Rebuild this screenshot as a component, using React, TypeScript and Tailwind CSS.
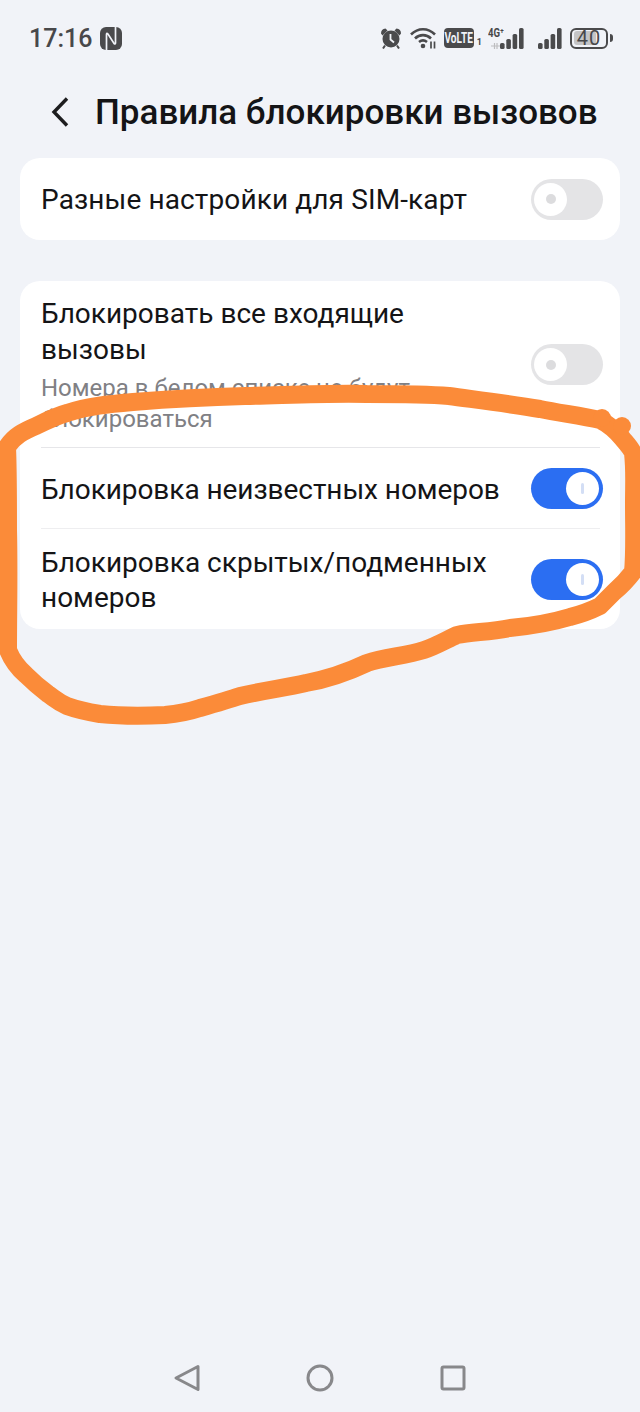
const font = { fontFamily: '"Roboto", "Noto Sans", sans-serif' };

const Toggle = ({ on }: { on?: boolean }) => {
  if (on) {
    return (
      <div className="w-[72px] h-[41px] shrink-0 rounded-full bg-[#2b6ef2] flex items-center justify-end pr-[4px]">
        <div className="w-[33px] h-[33px] rounded-full bg-white flex items-center justify-center">
          <div className="w-[3px] h-[11px] rounded-full bg-[#d3def5]" />
        </div>
      </div>
    );
  }
  return (
    <div className="w-[72px] h-[41px] shrink-0 rounded-full bg-[#e4e4e6] flex items-center pl-[3px]">
      <div className="w-[33px] h-[33px] rounded-full bg-white flex items-center justify-center">
        <div className="w-[10px] h-[10px] rounded-full bg-[#dcdcde]" />
      </div>
    </div>
  );
};

const Bars = () => (
  <svg width="24" height="21" viewBox="0 0 24 21" fill="#4a4a4c">
    <rect x="0" y="15" width="4.6" height="6" rx="1.6" />
    <rect x="6.3" y="11" width="4.6" height="10" rx="1.6" />
    <rect x="12.6" y="6" width="4.6" height="15" rx="1.6" />
    <rect x="19" y="0" width="4.6" height="21" rx="1.6" />
  </svg>
);

const StatusBar = () => (
  <div className="h-[76px] shrink-0 flex items-center pl-[29px] pr-[27px] text-[#48484a]">
    <span className="text-[25px] font-medium leading-none">17:16</span>
    <svg className="ml-[8px]" width="22" height="23" viewBox="0 0 22 23">
      <rect x="0" y="0" width="22" height="23" rx="6" fill="#4a4a4c" />
      <path d="M6.500 23V7.500q0-2 1.500-.5l6 9.500q1.500 1 1.500-.5V0" fill="none" stroke="#f1f3f8" strokeWidth="1.700" />
    </svg>
    <div className="ml-auto flex items-center">
      <svg width="22" height="22" viewBox="0 0 22 22" fill="#4a4a4c">
        <circle cx="11" cy="12" r="8.5" />
        <path d="M1 6.500Q1 2 5.500 1.500L7.500 3.500 2.500 8.500zM21 6.500Q21 2 16.500 1.500L14.500 3.500 19.500 8.500z" />
        <path d="M5 18.500l-2 3M17 18.500l2 3" stroke="#4a4a4c" strokeWidth="2" />
        <path d="M10.500 7v5.500l3.500 3" fill="none" stroke="#f1f3f8" strokeWidth="1.800" />
      </svg>
      <svg className="ml-[8px]" width="27" height="22" viewBox="0 0 27 22" fill="none" stroke="#4a4a4c" strokeWidth="2.600">
        <path d="M1 7.500c7-7 17-7 24 0" />
        <path d="M5 11.500c4.500-4.500 11.500-4.500 16 0" />
        <path d="M9 15c2.500-2 5.500-2 8 0" />
        <circle cx="13" cy="19" r="2.300" fill="#4a4a4c" stroke="none" />
        <path d="M21 14.500v7M24.500 14.500v7" strokeWidth="1.700" />
      </svg>
      <div className="ml-[7px] w-[30px] h-[20px] rounded-[4px] bg-[#4a4a4c] text-[#f1f3f8] text-[14px] font-bold leading-[20px] flex justify-center overflow-hidden">
        <span className="inline-block scale-x-[0.72] whitespace-nowrap">VoLTE</span>
      </div>
      <span className="ml-[3px] self-end text-[9px] font-bold leading-none mb-[2px]">1</span>
      <div className="ml-[6px] relative w-[36px] h-[21px] flex justify-end">
        <span className="absolute left-0 top-[-1px] text-[12px] font-bold leading-none inline-block scale-x-[0.8] origin-left whitespace-nowrap">4G⁺</span>
        <svg className="absolute left-[3px] bottom-0" width="9" height="6" viewBox="0 0 9 6" fill="none" stroke="#bdbdc0" strokeWidth="1.200">
          <path d="M0 3h9M3.500 0v6M6 0v6" />
        </svg>
        <Bars />
      </div>
      <div className="ml-[14px] flex">
        <Bars />
      </div>
      <div className="ml-[8px] w-[38px] h-[21px] rounded-[6px] border-[2px] border-[#4a4a4c] p-[1.5px] relative">
        <div className="w-[22px] h-full rounded-[3px] bg-[#c4c4c6]" />
        <span className="absolute inset-0 flex items-center justify-center text-[20px] leading-none tracking-[1px]">40</span>
      </div>
      <div className="ml-[2px] w-[3px] h-[8px] rounded-r-full bg-[#4a4a4c]" />
    </div>
  </div>
);

export default function App() {
  return (
    <div className="relative w-[640px] h-screen overflow-hidden bg-[#f1f3f8] flex flex-col" style={font}>
      <StatusBar />

      {/* TITLE */}
      <div className="h-[82px] shrink-0 flex items-center pl-[50px] pb-[10px]">
        <svg width="20" height="32" viewBox="0 0 20 32" fill="none" stroke="#1d1d1f" strokeWidth="3.400">
          <path d="M17 2.500L4 16l13 13.500" />
        </svg>
        <h1 className="ml-[25px] text-[35px] font-medium text-[#141416] leading-none whitespace-nowrap">
          Правила блокировки вызовов
        </h1>
      </div>

      {/* CARDS */}
      <div className="px-[20px] flex flex-col gap-[41px]">
        <div className="h-[82px] bg-white rounded-[20px] pl-[21px] pr-[17px] flex items-center justify-between">
          <span className="pt-[2px] text-[28px] tracking-[0.12px] text-[#141416] leading-[36px]">Разные настройки для SIM-карт</span>
          <Toggle />
        </div>

        <div className="bg-white rounded-[20px] pl-[21px] pr-[17px] pb-[14px] pt-[15px]">
          <div className="flex items-center justify-between pb-[12px]">
            <div className="w-[450px]">
              <div className="text-[28px] text-[#141416] leading-[36px]">Блокировать все входящие вызовы</div>
              <div className="mt-[5px] text-[24px] text-[#808084] leading-[31px]">
                Номера в белом списке не будут блокироваться
              </div>
            </div>
            <div className="mb-[2px]">
              <Toggle />
            </div>
          </div>
          <div className="h-px mr-[3px] bg-[#e6e6e9]" />
          <div className="h-[80px] flex items-center justify-between">
            <span className="pt-[3px] text-[28px] tracking-[-0.06px] text-[#141416] leading-[36px] whitespace-nowrap">Блокировка неизвестных номеров</span>
            <Toggle on />
          </div>
          <div className="h-px mr-[3px] bg-[#eeeef0]" />
          <div className="pt-[16px] flex items-center justify-between">
            <div className="w-[460px] text-[28px] text-[#141416] leading-[35px]">
              Блокировка скрытых/подменных номеров
            </div>
            <div className="mb-[2px]">
              <Toggle on />
            </div>
          </div>
        </div>
      </div>

      {/* NAV */}
      <div className="mt-auto h-[48px] shrink-0 flex items-start justify-center gap-[105px]">
        <svg width="28" height="28" viewBox="0 0 28 28" fill="none" stroke="#88888b" strokeWidth="3" strokeLinejoin="round">
          <path d="M25 2.500L3 14l22 11.500z" />
        </svg>
        <svg width="28" height="28" viewBox="0 0 28 28" fill="none" stroke="#88888b" strokeWidth="3">
          <circle cx="14" cy="14" r="12" />
        </svg>
        <svg width="28" height="28" viewBox="0 0 28 28" fill="none" stroke="#88888b" strokeWidth="3" strokeLinejoin="round">
          <rect x="3" y="3" width="22" height="22" rx="1.500" />
        </svg>
      </div>

      {/* marker scribble drawn over the screenshot */}
      <svg className="absolute inset-0 pointer-events-none" width="640" height="1412" viewBox="0 0 640 1412" fill="none" stroke="#fb8b39" strokeWidth="18" strokeLinejoin="round">
        <path d="M8 650C8 610 9 570 8 530C8 500 8 470 7 447C14 436 24 431 36 426C46 421 56 416 67 413C88 406 110 404 133 402C170 399 205 397 245 396C290 395 330 393 367 394C395 394 425 394 449 396C478 400 510 404 540 409C560 413 582 416 600 420C610 425 617 432 622 438C627 444 631 448 633 453C635 470 634 485 634 503C634 530 635 552 633 572C627 580 621 586 614 592C608 598 604 602 600 606C590 611 582 614 570 617C550 623 532 626 510 628C490 632 472 632 457 635C446 640 436 646 424 650C405 656 385 657 367 663C348 672 328 679 306 683C285 688 265 690 240 696C228 700 214 704 200 708C188 712 176 714 165 715C145 716 120 716 100 714C88 712 78 710 67 706C58 702 54 698 48 694C40 688 33 682 26 675C18 668 12 660 8 650Z" />
        <circle cx="602" cy="418" r="9" fill="#fb8b39" stroke="none" />
        <circle cx="622" cy="426" r="9" fill="#fb8b39" stroke="none" />
      </svg>
    </div>
  );
}
